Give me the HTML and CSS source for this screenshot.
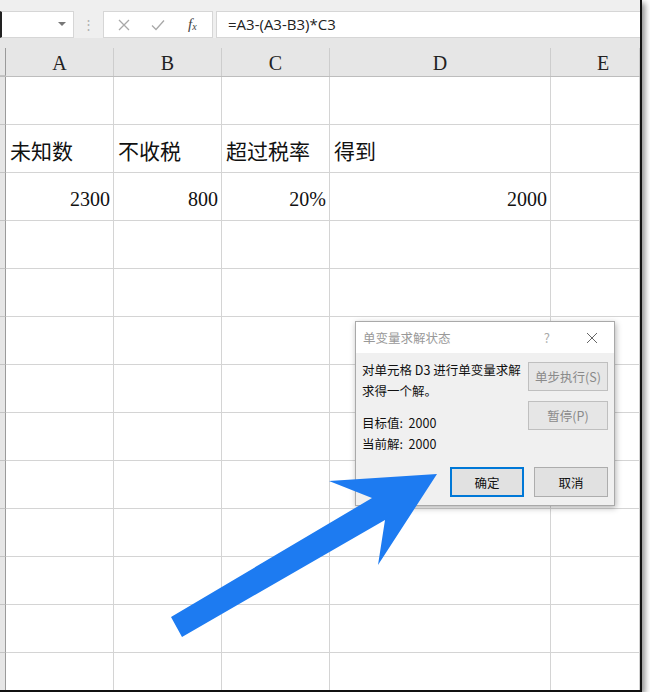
FILE: index.html
```html
<!DOCTYPE html>
<html lang="zh-CN">

<head>
  <meta charset="UTF-8">
  <meta name="viewport" content="width=device-width, initial-scale=1.0">
  <title>单变量求解</title>
  <link rel="stylesheet" href="styles.css">
</head>

<body>
  <div class="window">
    <div class="toolbar">
      <div class="namebox"><span class="caret"></span></div>
      <div class="grip">⋮</div>
      <div class="fnbox">
        <svg width="12" height="12" viewBox="0 0 12 12"><path d="M1 1L11 11M11 1L1 11" stroke="#a8a8a8" stroke-width="1.3" fill="none"/></svg>
        <svg width="14" height="12" viewBox="0 0 14 12"><path d="M1 6.5L5 10.5L13 1.5" stroke="#a8a8a8" stroke-width="1.3" fill="none"/></svg>
        <span class="fx">f<sub>x</sub></span>
      </div>
      <div class="formula">=A3-(A3-B3)*C3</div>
    </div>

    <div class="colhead">
      <div class="hc rh"></div>
      <div class="hc">A</div>
      <div class="hc">B</div>
      <div class="hc">C</div>
      <div class="hc">D</div>
      <div class="hc last">E</div>
    </div>

    <div class="sheet">
      <div class="rh"></div><div class="cell"></div><div class="cell"></div><div class="cell"></div><div class="cell"></div><div class="cell"></div>

      <div class="rh"></div>
      <div class="cell txt">未知数</div>
      <div class="cell txt">不收税</div>
      <div class="cell txt">超过税率</div>
      <div class="cell txt">得到</div>
      <div class="cell"></div>

      <div class="rh"></div>
      <div class="cell num">2300</div>
      <div class="cell num">800</div>
      <div class="cell num">20%</div>
      <div class="cell num">2000</div>
      <div class="cell"></div>

      <div class="rh"></div><div class="cell"></div><div class="cell"></div><div class="cell"></div><div class="cell"></div><div class="cell"></div>
      <div class="rh"></div><div class="cell"></div><div class="cell"></div><div class="cell"></div><div class="cell"></div><div class="cell"></div>
      <div class="rh"></div><div class="cell"></div><div class="cell"></div><div class="cell"></div><div class="cell"></div><div class="cell"></div>
      <div class="rh"></div><div class="cell"></div><div class="cell"></div><div class="cell"></div><div class="cell"></div><div class="cell"></div>
      <div class="rh"></div><div class="cell"></div><div class="cell"></div><div class="cell"></div><div class="cell"></div><div class="cell"></div>
      <div class="rh"></div><div class="cell"></div><div class="cell"></div><div class="cell"></div><div class="cell"></div><div class="cell"></div>
      <div class="rh"></div><div class="cell"></div><div class="cell"></div><div class="cell"></div><div class="cell"></div><div class="cell"></div>
      <div class="rh"></div><div class="cell"></div><div class="cell"></div><div class="cell"></div><div class="cell"></div><div class="cell"></div>
      <div class="rh"></div><div class="cell"></div><div class="cell"></div><div class="cell"></div><div class="cell"></div><div class="cell"></div>
      <div class="rh"></div><div class="cell"></div><div class="cell"></div><div class="cell"></div><div class="cell"></div><div class="cell"></div>
    </div>

    <div class="dialog">
      <div class="title">
        <span>单变量求解状态</span>
        <span class="help">?</span>
        <svg class="x" width="12" height="12" viewBox="0 0 12 12"><path d="M1 1L11 11M11 1L1 11" stroke="#666" stroke-width="1" fill="none"/></svg>
      </div>
      <div class="body">
        <div class="top">
          <div class="msg">
            <p>对单元格 D3 进行单变量求解</p>
            <p>求得一个解。</p>
            <p class="gap">目标值:&nbsp;&nbsp;2000</p>
            <p>当前解:&nbsp;&nbsp;2000</p>
          </div>
          <div class="side">
            <button class="btn off">单步执行(S)</button>
            <button class="btn off">暂停(P)</button>
          </div>
        </div>
        <div class="footer">
          <button class="btn ok">确定</button>
          <button class="btn">取消</button>
        </div>
      </div>
    </div>

    <svg class="arrow" width="640" height="690" viewBox="0 0 640 690">
      <polygon points="171,617 372,498 329,481 437,474 378,565 385,520 182,637" fill="#1d7bf1"/>
    </svg>
  </div>
</body>

</html>
```

FILE: styles.css
```css
body {
  margin: 0;
  background: #fff;
}

.window {
  position: relative;
  width: 640px;
  height: 690px;
  overflow: hidden;
  border-right: 2px solid #111;
  border-bottom: 2px solid #111;
  box-shadow: 3px 3px 6px rgba(0, 0, 0, 0.45);
  background: #fff;
}

/* formula bar */
.toolbar {
  height: 38px;
  box-sizing: border-box;
  padding-top: 11px;
  background: #efefef;
  display: flex;
  align-items: flex-start;
}

.namebox,
.fnbox,
.formula {
  height: 27px;
  box-sizing: border-box;
  background: #fff;
  border: 1px solid #d6d6d6;
}

.namebox {
  width: 74px;
  border-left: 2px solid #222;
  position: relative;
}

.caret {
  position: absolute;
  right: 7px;
  top: 10px;
  border-left: 4px solid transparent;
  border-right: 4px solid transparent;
  border-top: 4px solid #777;
}

.grip {
  width: 29px;
  text-align: center;
  color: #b0b0b0;
  font: 13px/27px "Liberation Sans", sans-serif;
}

.fnbox {
  width: 110px;
  display: flex;
  align-items: center;
  padding-left: 14px;
  gap: 21px;
}

.fx {
  font: italic 15px "Liberation Serif", serif;
  color: #444;
  margin-left: 2px;
}

.fx sub {
  font-size: 10px;
  vertical-align: -1px;
}

.formula {
  flex: 1;
  margin-left: 3px;
  border-right: none;
  padding-left: 11px;
  font: 15px/25px "Open Sans", "Noto Sans CJK SC", sans-serif;
  color: #222;
}

/* grid */
.colhead,
.sheet {
  display: grid;
  grid-template-columns: 6px 108px 108px 108px 221px 89px;
}

.colhead {
  background: #e6e6e6;
  padding-top: 10px;
  border-bottom: 1px solid #bdbdbd;
}

.hc {
  height: 28px;
  box-sizing: border-box;
  border-right: 1px solid #cdcdcd;
  text-align: center;
  font: 20px/30px "Liberation Serif", serif;
  color: #222;
}

.hc.rh {
  border-right: 1px solid #9a9a9a;
}

.hc.last {
  padding-left: 16px;
}

.sheet {
  grid-auto-rows: 48px;
}

.rh {
  background: #e6e6e6;
  border-right: 1px solid #9a9a9a;
  border-bottom: 1px solid #c4c4c4;
}

.cell {
  border-right: 1px solid #d4d4d4;
  border-bottom: 1px solid #d4d4d4;
  font-family: "Liberation Serif", "Noto Sans CJK SC", serif;
  color: #111;
  white-space: nowrap;
}

.cell.txt {
  font-size: 21px;
  line-height: 54px;
  padding-left: 4px;
}

.cell.num {
  font-size: 20px;
  line-height: 52px;
  text-align: right;
  padding-right: 3px;
}

/* dialog */
.dialog {
  position: absolute;
  left: 355px;
  top: 321px;
  width: 258px;
  border: 1px solid #a9a9a9;
  box-shadow: 1px 2px 6px rgba(0, 0, 0, 0.3);
  font-family: "Noto Sans CJK SC", sans-serif;
  font-size: 12.5px;
  background: #f0f0f0;
}

.dialog .title {
  height: 31px;
  background: #fff;
  display: flex;
  align-items: center;
  padding-left: 7px;
  color: #999;
}

.dialog .title .help {
  margin-left: auto;
  color: #aaa;
  font-size: 13px;
}

.dialog .title .x {
  margin: 0 16px 0 36px;
}

.dialog .body {
  padding: 9px 6px 8px 6px;
}

.dialog .top {
  display: flex;
  justify-content: space-between;
}

.dialog .msg p {
  margin: 0;
  line-height: 21px;
  color: #111;
}

.dialog .msg p:first-child {
  margin-top: -3px;
}

.dialog .msg .gap {
  margin-top: 11px;
}

.dialog .side {
  display: flex;
  flex-direction: column;
  gap: 10px;
}

.btn {
  width: 80px;
  height: 29px;
  border: 1px solid #adadad;
  background: #e1e1e1;
  font-family: "Noto Sans CJK SC", sans-serif;
  font-size: 12.5px;
  color: #111;
  padding: 0;
}

.btn.off {
  color: #8a8a8a;
  border-color: #bfbfbf;
  background: #e6e6e6;
}

.dialog .footer {
  display: flex;
  justify-content: flex-end;
  gap: 10px;
  margin-top: 13px;
}

.dialog .footer .btn {
  width: 74px;
  height: 30px;
}

.dialog .footer .ok {
  border: 2px solid #0078d7;
}

.arrow {
  position: absolute;
  left: 0;
  top: 0;
  pointer-events: none;
}
```
